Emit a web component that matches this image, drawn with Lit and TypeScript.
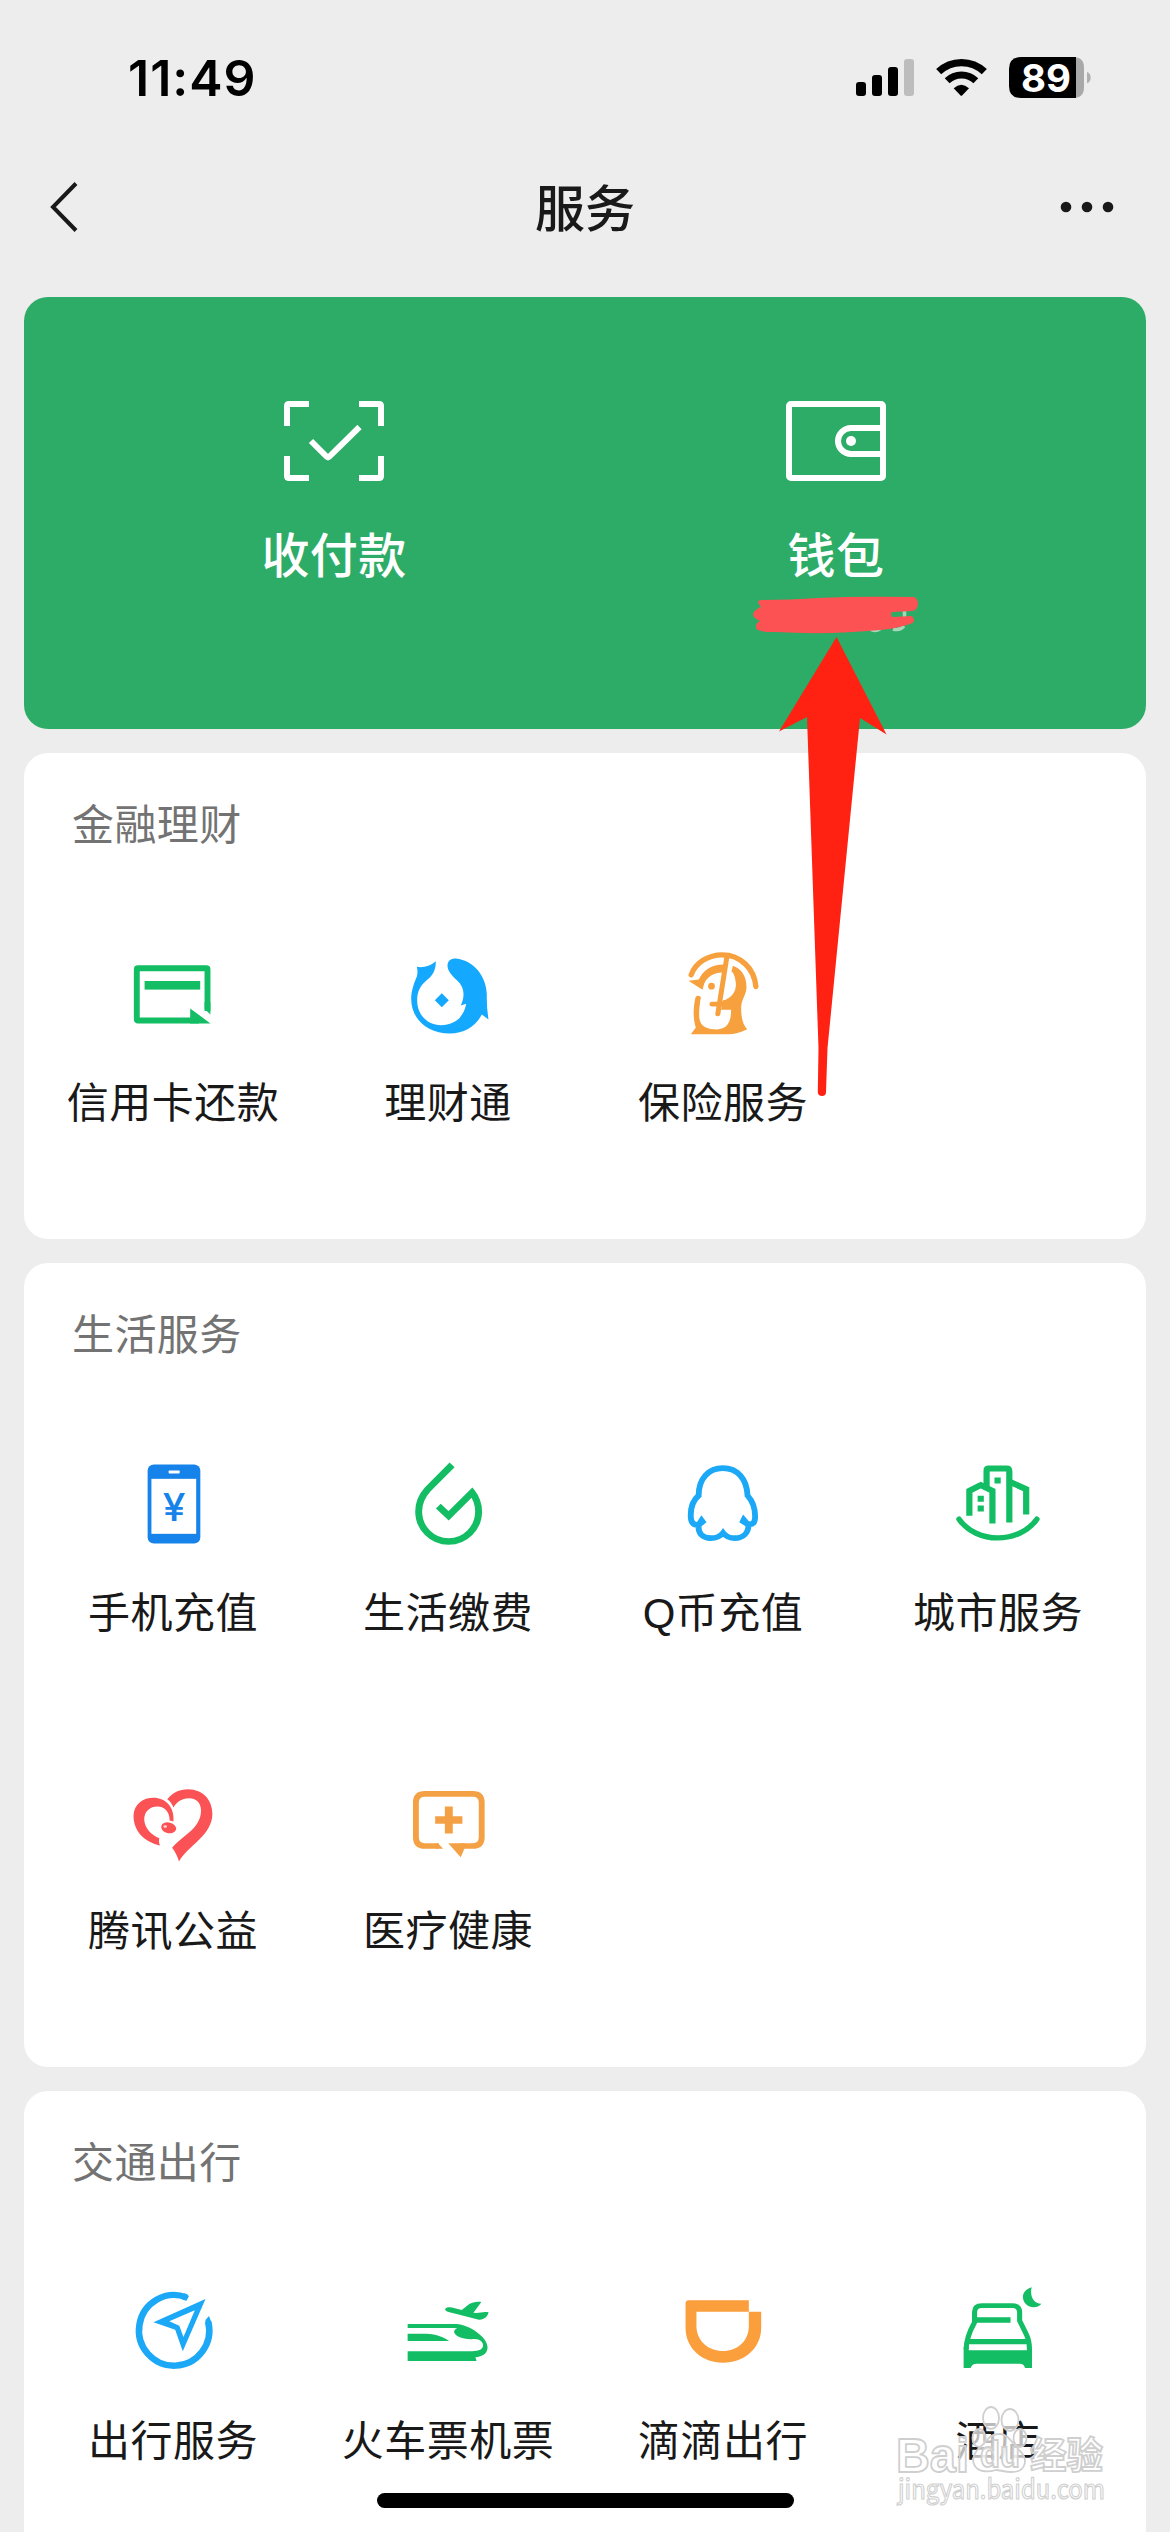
import { LitElement, html, svg, css, type SVGTemplateResult } from "lit";
import { customElement, property } from "lit/decorators.js";

const GREEN = "#12bd63";
const BLUE = "#1ba8f7";
const ORANGE = "#f7a03e";

interface Glyph {
  box: string;
  art: SVGTemplateResult;
}

const glyphs: Record<string, Glyph> = {
  card: {
    box: "0 0 88 88",
    art: svg`
      <path d="M78.5 59 V17.5 Q78.500 16.300 77.200 16.300 H9 Q7.800 16.300 7.800 17.500 V67.300 Q7.800 68.500 9 68.500 H70" fill="none" stroke=${GREEN} stroke-width="5.9"/>
      <path d="M75.600 57 L81.400 62.500 V50 H75.600Z" fill=${GREEN}/>
      <path d="M61.200 56.400 L81.400 71.400 H61.200Z" fill=${GREEN}/>
      <rect x="15.600" y="29" width="55.600" height="8.600" fill=${GREEN}/>`,
  },
  fish: {
    box: "10.5 34.5 264 264",
    art: svg`
      <path fill="#14a9fe" d="M49 79 Q80 84 106 62 C106 90 96 105 80 118 C60 135 50 152 50 180 C50 222 80 254 122 254 C160 254 190 232 197 190 L181 195 C194 165 192 140 170 120 C152 103 141 90 141 75 C141 62 150 54 166 54 C222 60 259 110 259 165 Q258 200 264 237 L244 222 C225 258 190 279 148 279 C80 279 32 235 32 175 C32 150 42 125 49 108 Q53 94 49 79Z"/>
      <path fill="#14a9fe" d="M124 158 L145 179 L124 200 L103 179Z"/>`,
  },
  umbrella: {
    box: "835.5 34.5 264 264",
    art: svg`
      <g fill="none" stroke=${ORANGE} stroke-linecap="round">
        <path d="M872 103 C886 65 925 43 965 43 C1020 43 1062 85 1066 138" stroke-width="16"/>
        <path d="M979 50 L952 220" stroke-width="15"/>
        <path d="M934 191 H980" stroke-width="14"/>
      </g>
      <g fill=${ORANGE}>
        <path d="M864 121 L895 117 C908 88 935 71 972 72 L969 96 C942 95 920 108 911 130 L906 148Z"/>
        <circle cx="933" cy="137" r="10"/>
        <path d="M997 76 C1025 86 1038 110 1038 140 C1038 162 1023 175 1022 200 C1022 230 1026 252 1040 266 C1020 276 1000 281 985 281 H871 L886 261 C877 235 878 200 885 170 Q893 162 901 170 C896 200 894 225 898 240 C902 258 922 267 950 267 C980 265 992 245 992 208 H962 L966 180 C995 174 1008 150 1006 128 C1004 108 1000 98 993 93Z"/>
      </g>`,
  },
  phone: {
    box: "198.9 94.5 255.5 264",
    art: svg`
      <rect x="253" y="102" width="153" height="237" rx="18" fill="#1583ea"/>
      <rect x="264" y="145" width="130" height="165" fill="#fff"/>
      <rect x="314" y="120" width="32" height="9" rx="2" fill="#fff"/>
      <text class="yen" x="330" y="271" text-anchor="middle" textLength="66" lengthAdjust="spacingAndGlyphs">¥</text>`,
  },
  drop: {
    box: "997.4 94.5 255.5 264",
    art: svg`
      <path d="M1137 103 L1066 177 C1044 202 1040 222 1040 243 A87 90 0 0 0 1214 243 C1214 222 1208 203 1195 186 L1127 256 L1097 227" fill="none" stroke=${GREEN} stroke-width="20"/>`,
  },
  penguin: {
    box: "228 94.5 255.5 264",
    art: svg`
      <path d="M285 195 C285 143 315 113 355 113 C398 113 425 145 427 195 C442 212 449 230 449 258 C449 276 443 283 430 281 C430 310 412 323 390 323 C374 323 362 315 356 307 C350 315 336 323 320 323 C298 323 282 310 285 283 C268 285 262 274 262 255 C262 230 270 208 285 195Z" fill="none" stroke=${BLUE} stroke-width="17"/>
      <path d="M293 254 L308 275 L288 292 L278 278Z M414 252 L403 275 L428 292 L436 278Z" fill=${BLUE}/>`,
  },
  city: {
    box: "1026.4 94.5 255.5 264",
    art: svg`
      <g fill="none" stroke=${GREEN} stroke-width="18">
        <path d="M1071 256 V181 L1104 164 L1138 181 V279"/>
        <path d="M1121 168 V120 Q1121 114 1127 114 H1180 Q1187 114 1187 122 V276"/>
        <path d="M1188 154 L1236 176 V252"/>
        <path d="M1041 266 C1092 341 1215 341 1267 266" stroke-width="16" stroke-linecap="round"/>
      </g>
      <path fill=${GREEN} d="M1095 196h18v18h-18z M1095 225h18v18h-18z M1144 141h18v18h-18z"/>`,
  },
  heart: {
    box: "198.9 58.5 255.5 264",
    art: svg`
      <g fill="#fb5255">
        <path d="M310 116 C325 96 345 86 370 86 C415 86 441 120 441 160 C441 225 370 255 344 303 C340 288 333 274 324 262 C350 228 408 205 408 150 C408 125 392 113 374 113 C350 113 336 126 328 141 C324 130 318 121 310 116Z"/>
        <path d="M317 180 C317 152 300 138 282 138 C260 138 243 152 243 178 C245 205 265 225 287 233 C285 240 286 248 289 255 C240 243 212 210 212 165 C214 130 240 112 270 112 C305 112 332 140 328 183Z"/>
        <ellipse cx="314" cy="202" rx="22" ry="16" transform="rotate(15 314 202)"/>
      </g>
      <ellipse cx="304" cy="198" rx="5" ry="4" fill="#fff" opacity=".8"/>`,
  },
  medical: {
    box: "997.4 58.5 255.5 264",
    art: svg`
      <path d="M1098 256.500 H1058 Q1032 256 1032 230 V126 Q1032 100 1058 100 H1197 Q1223 100 1223 126 V230 Q1223 256 1197 256.500 H1160" fill="none" stroke="#f3a144" stroke-width="17"/>
      <path fill="#f3a144" d="M1096 248 L1111 265 H1090 V248Z M1126 248 H1174 V262 L1162 290Z M1116 138h23v29h28v23h-28v29h-23v-29h-28v-23h28z"/>`,
  },
  compass: {
    box: "198.9 90 255.5 264",
    art: svg`
      <path d="M366 112 A102 106 0 1 0 429 186" fill="none" stroke=${BLUE} stroke-width="19"/>
      <path fill=${BLUE} d="M360 99 L373 108 L366 122 L354 119Z M420 192 L421 180 L431 168 L438 186 L439 200Z"/>
      <path fill=${BLUE} fill-rule="evenodd" d="M421 117 L270 187 L333 209 L355 274Z M390 151 L316 184 L345 197 L357 231Z"/>`,
  },
  train: {
    box: "997.4 90 255.5 264",
    art: svg`
      <g fill=${GREEN}>
        <path d="M1008 192 H1150 C1185 194 1240 230 1240 262 C1240 282 1224 290 1205 292 L1208 303 H1008 V274 H1195 C1216 273 1227 268 1227 256 C1227 247 1218 237 1203 237 C1170 240 1140 228 1143 212 Q1146 207 1152 205 L1140 204 H1008Z"/>
        <path d="M1008 221 H1062 C1092 222 1115 232 1128 243 H1008Z"/>
        <path d="M1117 147 C1119 140 1134 140 1145 145 L1165 150 L1187 132 C1195 127 1210 123 1222 126 L1199 158 C1216 162 1225 153 1243 157 C1240 170 1230 180 1215 179 L1150 162 C1135 158 1115 156 1117 147Z"/>
      </g>`,
  },
  didi: {
    box: "216 90 242 264",
    art: svg`
      <path fill="#fb9f3c" d="M234 130 Q234 121 243 121 H408 V155 H264 V198 C264 244 298 273 337 273 C376 273 408 244 408 198 V155 H442 V203 C442 265 395 308 337 308 C280 308 234 265 234 203Z"/>`,
  },
  hotel: {
    box: "972.5 90 242 264",
    art: svg`
      <g fill="none" stroke=${GREEN} stroke-width="14">
        <path d="M1006 268 Q1006 232 1029 187 V157 Q1029 137 1049 137 H1133 Q1153 137 1153 157 V182 L1171 222 Q1180 242 1180 268"/>
        <path d="M1029 180 H1128 M1012 245 H1175" stroke-width="16"/>
      </g>
      <path fill=${GREEN} d="M999 324 V262 H1013 V271 H1173 V262 H1187 V324 H1168 Q1165 311 1153 311 H1035 Q1022 311 1018 324Z M1186 82 C1160 90 1156 115 1170 132 C1183 146 1203 144 1213 131 C1192 132 1180 108 1186 82Z"/>`,
  },
};

const sections = [
  {
    title: "金融理财",
    items: [
      ["card", "信用卡还款"],
      ["fish", "理财通"],
      ["umbrella", "保险服务"],
    ],
  },
  {
    title: "生活服务",
    items: [
      ["phone", "手机充值"],
      ["drop", "生活缴费"],
      ["penguin", "Q币充值"],
      ["city", "城市服务"],
      ["heart", "腾讯公益"],
      ["medical", "医疗健康"],
    ],
  },
  {
    title: "交通出行",
    items: [
      ["compass", "出行服务"],
      ["train", "火车票机票"],
      ["didi", "滴滴出行"],
      ["hotel", "酒店"],
    ],
  },
];

@customElement("service-card")
class ServiceCard extends LitElement {
  static styles = css`
    :host {
      display: block;
      background: #fff;
      border-radius: 24px;
    }
    .title {
      padding: 44px 48px 0;
      height: 124px;
      line-height: 50px;
      font-size: 42px;
      letter-spacing: 0.4px;
      color: #737373;
    }
    .grid {
      display: grid;
      grid-template-columns: repeat(4, 275px);
      grid-auto-rows: 318px;
      padding: 0 11px;
    }
    .item {
      display: flex;
      flex-direction: column;
      align-items: center;
      gap: 39px;
      padding-top: 31px;
      box-sizing: border-box;
    }
    .icon {
      width: 88px;
      height: 88px;
      overflow: visible;
    }
    .label {
      font-family: "Liberation Sans", "Noto Sans CJK SC", sans-serif;
      font-size: 42px;
      letter-spacing: 0.5px;
      line-height: 50px;
      padding-left: 1px;
      color: #191919;
      white-space: nowrap;
    }
    .yen {
      font: 500 114px Inter, "Liberation Sans", sans-serif;
      fill: #1583ea;
    }
  `;
  @property({ attribute: false }) section = sections[0];

  render() {
    return html`
      <div class="title">${this.section.title}</div>
      <div class="grid">
        ${this.section.items.map(
          ([icon, label]) => html`<div class="item">
            <svg class="icon" viewBox=${glyphs[icon].box} preserveAspectRatio="none">${glyphs[icon].art}</svg>
            <div class="label">${label}</div>
          </div>`
        )}
      </div>
    `;
  }
}

@customElement("app-root")
class AppRoot extends LitElement {
  static styles = css`
    :host {
      display: block;
      font-family: "Noto Sans CJK SC", sans-serif;
    }
    .screen {
      position: relative;
      width: 1170px;
      height: 2532px;
      overflow: hidden;
      background: #ededed;
    }
    .status {
      display: flex;
      justify-content: space-between;
      align-items: center;
      height: 80px;
      padding: 40px 60px 0 128px;
    }
    .time {
      font: 600 50px/60px Inter, "Liberation Sans", sans-serif;
      letter-spacing: 1px;
      color: #000;
      padding-bottom: 4px;
    }
    .signals {
      width: 270px;
      height: 80px;
    }
    .pct {
      font: 700 116px Inter, "Liberation Sans", sans-serif;
      fill: #fff;
    }
    .nav {
      display: grid;
      grid-template-columns: 1fr auto 1fr;
      align-items: center;
      height: 177px;
      padding: 0 56px 3px 48px;
      box-sizing: border-box;
    }
    .back {
      width: 32px;
      height: 54px;
    }
    .heading {
      font-size: 50px;
      font-weight: 500;
      line-height: 60px;
      color: #191919;
      padding: 0 0 5px 8px;
    }
    .more {
      width: 56px;
      height: 14px;
      justify-self: end;
    }
    .cards {
      display: flex;
      flex-direction: column;
      gap: 24px;
      padding: 0 24px;
    }
    .wallet {
      display: grid;
      grid-template-columns: 502px 502px;
      padding: 104px 59px 0;
      height: 431.5px;
      box-sizing: border-box;
      border-radius: 24px;
      background: #2dac68;
    }
    .pay {
      display: flex;
      flex-direction: column;
      align-items: center;
      gap: 42px;
      color: #fff;
      font-size: 48px;
      font-weight: 500;
      letter-spacing: 0.4px;
      line-height: 58px;
    }
    .pay svg {
      width: 100px;
      height: 80px;
    }
    .overlay {
      position: absolute;
      left: 0;
      top: 0;
      width: 1170px;
      height: 2532px;
      pointer-events: none;
    }
    .home {
      position: absolute;
      left: 377px;
      bottom: 24px;
      width: 417px;
      height: 15px;
      border-radius: 8px;
      background: #000;
    }
    .mark {
      fill: #fff;
      fill-opacity: 0.7;
      stroke: #cfcfcf;
      stroke-width: 1.8;
    }
    .brand {
      font: 700 49px "Liberation Sans", sans-serif;
    }
    .brand-small {
      font: 700 36px "Liberation Sans", sans-serif;
    }
    .brand-cn {
      font: 700 37px "Noto Sans CJK SC", sans-serif;
    }
    .site {
      font: 400 27.5px "Noto Sans CJK SC", sans-serif;
      stroke-width: 1.2;
    }
  `;

  render() {
    return html`
      <div class="screen">
        <div class="status">
          <div class="time">11:49</div>
          <svg class="signals" viewBox="0 0 810 240">
            <rect x="48" y="126" width="30" height="42" rx="9" />
            <rect x="96" y="105" width="30" height="63" rx="9" />
            <rect x="144" y="81" width="30" height="87" rx="9" />
            <rect x="192" y="57" width="30" height="111" rx="9" fill="#bdbdbd" />
            <g fill="none" stroke="#000">
              <path d="M296 95 A99.500 99.500 0 0 1 433 95" stroke-width="22" />
              <path d="M321.500 122 A62 62 0 0 1 407.500 122" stroke-width="21" />
            </g>
            <path d="M341 145 Q364 123 387 145 L367 166 Q364 169 361 166Z" />
            <path d="M700 51 Q732 51 732 83 V142 Q732 174 700 174Z" fill="#a9a9a9" />
            <path d="M708 51 V174 H543 Q507 174 507 138 V87 Q507 51 543 51Z" />
            <path d="M741 96 Q752 100 752 113 Q752 125 741 130Z" fill="#b0b0b0" />
            <text class="pct" x="543" y="155" textLength="150" lengthAdjust="spacingAndGlyphs">89</text>
          </svg>
        </div>
        <div class="nav">
          <svg class="back" viewBox="0 0 32 54">
            <path d="M28 3.500 L5 27 L28 50.500" fill="none" stroke="#191919" stroke-width="4" />
          </svg>
          <div class="heading">服务</div>
          <svg class="more" viewBox="0 0 56 14" fill="#191919">
            <circle cx="8" cy="7" r="5.300" /><circle cx="29" cy="7" r="5.300" /><circle cx="50" cy="7" r="5.300" />
          </svg>
        </div>
        <div class="cards">
          <div class="wallet">
            <div class="pay">
              <svg viewBox="0 0 100 80" fill="none" stroke="#fff" stroke-width="6">
                <path d="M25 3 H5 Q3 3 3 5 V25 M75 3 H95 Q97 3 97 5 V25 M3 55 V75 Q3 77 5 77 H25 M97 55 V75 Q97 77 95 77 H75" />
                <path d="M27 40 L42.500 55.500 Q44 57 45.500 55.500 L75.500 26" />
              </svg>
              <div>收付款</div>
            </div>
            <div class="pay">
              <svg viewBox="0 0 100 80" fill="none" stroke="#fff" stroke-width="6">
                <rect x="3" y="3" width="94" height="74" rx="2" />
                <path d="M96 27 H65 A13 13 0 0 0 65 53 H96" />
                <circle cx="65" cy="40" r="5" fill="#fff" stroke="none" />
              </svg>
              <div>钱包</div>
            </div>
          </div>
          ${sections.map((s) => html`<service-card .section=${s}></service-card>`)}
        </div>

        <svg class="overlay" viewBox="0 0 1170 2532">
          <path d="M904.500 611 V617 M904 626 Q900 631 893 629 M880 629 Q875 632 870 629" fill="none" stroke="#a9d6b6" stroke-width="3.500" />
          <path
            fill="#fc5253"
            d="M760 600 Q790 600 818 598 Q860 596 914 597 Q918 599 918 604 Q917 611 912 611 L892 612 Q890 614 892 617 L912 616 Q917 622 910 624 Q895 629 880 630 Q830 635 775 632 Q755 632 756 627 Q755 624 760 621 Q753 618 753 614 Q754 610 761 607 Q756 602 760 600Z"
          />
          <path
            fill="#ff2111"
            d="M836.500 637 L886.500 734.500 L860 718 L827.500 1048 L826 1092 Q826 1096 822 1096 Q818 1096 817.800 1092 L818.500 1048 L807 717 L779 731.500Z"
          />
          <g class="mark">
            <ellipse cx="991" cy="2418" rx="8" ry="11" />
            <ellipse cx="1010" cy="2420" rx="8.500" ry="11" />
            <ellipse cx="979" cy="2438" rx="6.500" ry="9" />
            <ellipse cx="1020" cy="2438" rx="6.500" ry="9" />
            <path d="M1000 2434 C1008 2434 1013 2444 1019 2450 C1029 2459 1026 2472 1012 2472 C1004 2472 1000 2470 996 2470 C986 2473 974 2472 973 2460 C974 2449 984 2445 988 2439 Q992 2434 1000 2434Z" />
            <text class="brand" x="896" y="2472" textLength="73" lengthAdjust="spacingAndGlyphs">Bai</text>
            <text class="brand-small" x="980" y="2467" textLength="40" lengthAdjust="spacingAndGlyphs">du</text>
            <text class="brand-cn" x="1030" y="2469" textLength="73" lengthAdjust="spacingAndGlyphs">经验</text>
            <text class="site" x="898" y="2499" textLength="207" lengthAdjust="spacingAndGlyphs">jingyan.baidu.com</text>
          </g>
        </svg>
        <div class="home"></div>
      </div>
    `;
  }
}
